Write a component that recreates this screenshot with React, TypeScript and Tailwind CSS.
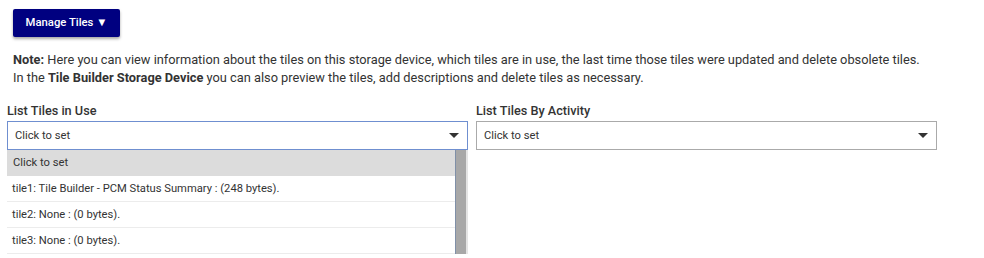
import React from 'react';

const tiles = [
    'tile1: Tile Builder - PCM Status Summary : (248 bytes).',
    'tile2: None : (0 bytes).',
    'tile3: None : (0 bytes).',
];

const Caret = () => (
    <svg width="10" height="5" viewBox="0 0 10 5" className="shrink-0">
        <path d="M0 0h10L5 5z" fill="#333" />
    </svg>
);

const App: React.FC = () => {
    return (
        <div className="w-[984px] h-[258px] overflow-hidden bg-white text-[#333] font-['Roboto',sans-serif]">
            <div className="pl-[13px] pt-[9px]">
                <button className="h-[28px] w-[107px] bg-[#000080] text-white text-[11.3px] font-medium rounded-[2px] shadow-[0_2px_3px_rgba(0,0,0,0.35)]">
                    Manage Tiles ▼
                </button>
                <div className="mt-[14px] text-[12.8px] leading-[18px]">
                    <p>
                        <span className="font-bold">Note:</span> Here you can view information about the tiles on this storage device, which tiles are in use, the last time those tiles were updated and delete obsolete tiles.
                    </p>
                    <p>
                        In the <span className="font-bold">Tile Builder Storage Device</span> you can also preview the tiles, add descriptions and delete tiles as necessary.
                    </p>
                </div>
            </div>

            <div className="flex gap-[8px] pl-[7px] mt-[15px]">
                <div className="w-[461px]">
                    <div className="text-[12.7px] font-medium leading-[18px]">List Tiles in Use</div>
                    <div className="mt-[1px] h-[29px] border border-[#6f8fd0] flex items-center justify-between pl-[7px] pr-[8px] text-[11.2px]">
                        <span>Click to set</span>
                        <Caret />
                    </div>
                    <div className="flex">
                        <div className="flex-1 border-r border-[#8090a8]">
                            <div className="h-[26px] bg-[#dcdcdc] flex items-center pl-[6px] text-[11.2px]">Click to set</div>
                            {tiles.map(t => (
                                <div key={t} className="h-[26px] border-b border-[#ececec] flex items-center pl-[5px] text-[11.2px]">
                                    {t}
                                </div>
                            ))}
                        </div>
                        <div className="w-[10px] bg-[#a8a8a8]" />
                        <div className="w-[2px] bg-[#e4e4e4]" />
                    </div>
                </div>

                <div className="w-[461px]">
                    <div className="text-[12.7px] font-medium leading-[18px]">List Tiles By Activity</div>
                    <div className="mt-[1px] h-[29px] border border-[#aaa] flex items-center justify-between pl-[7px] pr-[8px] text-[11.2px]">
                        <span>Click to set</span>
                        <Caret />
                    </div>
                </div>
            </div>
        </div>
    );
};

export default App;
